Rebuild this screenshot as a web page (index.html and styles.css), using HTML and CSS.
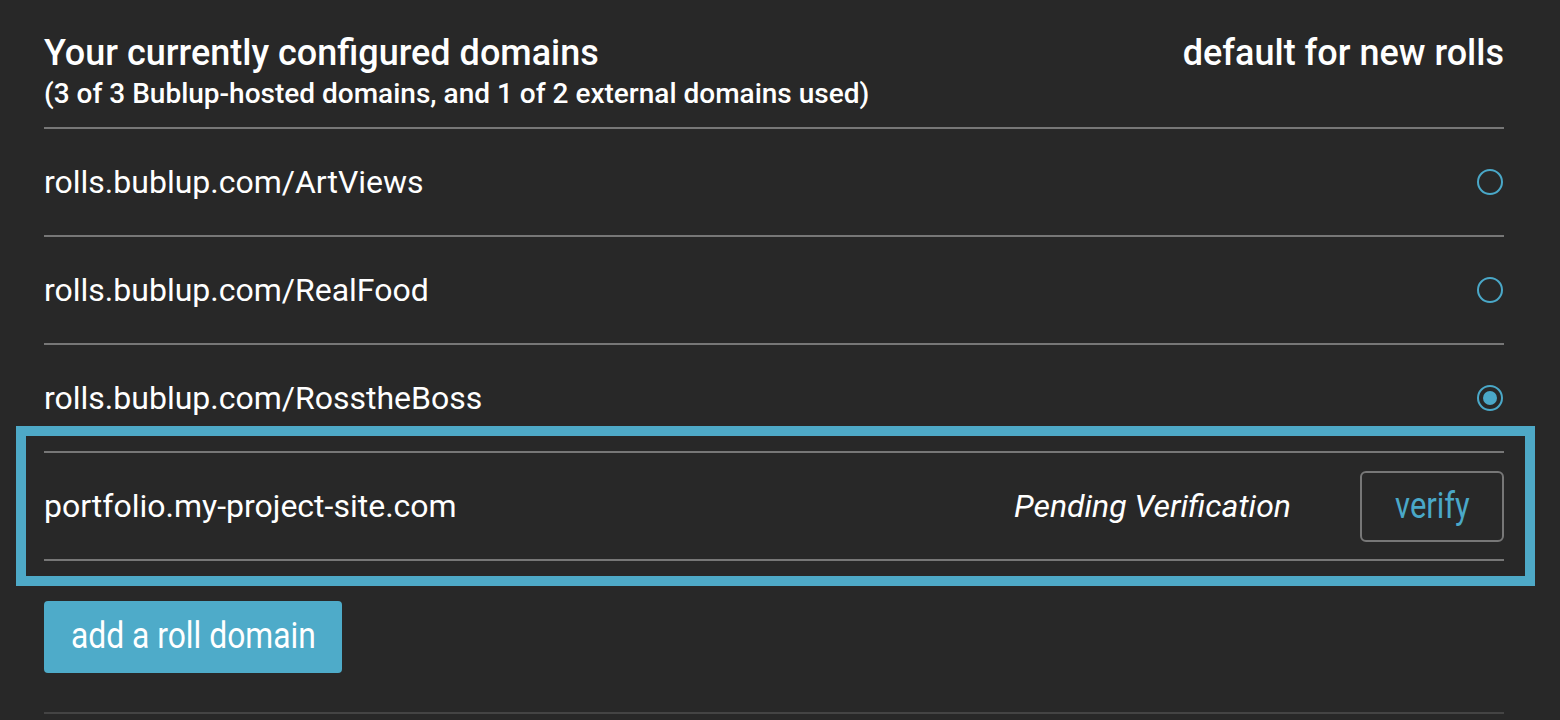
FILE: index.html
```html
<!DOCTYPE html>
<html lang="en">
<head>
    <meta charset="UTF-8">
    <meta name="viewport" content="width=device-width, initial-scale=1.0">
    <title>Roll domains</title>
    <link rel="stylesheet" href="styles.css">
</head>
<body>

<div class="domains">
    <div class="domains-header">
        <div>
            <h2>Your currently configured domains</h2>
            <p class="usage">(3 of 3 Bublup-hosted domains, and 1 of 2 external domains used)</p>
        </div>
        <h2>default for new rolls</h2>
    </div>

    <div class="row">
        <span class="domain">rolls.bublup.com/ArtViews</span>
        <span class="radio"></span>
    </div>
    <div class="row">
        <span class="domain">rolls.bublup.com/RealFood</span>
        <span class="radio"></span>
    </div>
    <div class="row">
        <span class="domain">rolls.bublup.com/RosstheBoss</span>
        <span class="radio checked"></span>
    </div>

    <div class="highlight">
        <div class="row pending">
            <span class="domain">portfolio.my-project-site.com</span>
            <span class="status">Pending Verification</span>
            <button type="button" class="verify"><span>verify</span></button>
        </div>
    </div>

    <button type="button" class="add-domain"><span>add a roll domain</span></button>

    <div class="footer-line"></div>
</div>

</body>
</html>
```

FILE: styles.css
```css
body {
    margin: 0;
    background-color: #282828;
    color: #fff;
    font-family: Roboto, "Liberation Sans", sans-serif;
}
.domains {
    width: 1460px;
    padding: 32px 0 0 44px;
}
.domains-header {
    display: flex;
    justify-content: space-between;
    align-items: flex-start;
    padding-bottom: 17px;
    border-bottom: 2px solid #777;
}
.domains-header h2 {
    margin: 0;
    font-size: 36px;
    font-weight: 500;
    line-height: 42px;
}
.usage {
    margin: 3px 0 0;
    font-size: 28px;
    font-weight: 500;
    line-height: 33px;
}
.row {
    display: flex;
    align-items: center;
    height: 106px;
    border-bottom: 2px solid #777;
    font-size: 32px;
}
.row:nth-of-type(4) {
    border-bottom: none;
}
.domain {
    flex: 1;
}
.radio {
    width: 22px;
    height: 22px;
    margin-right: 1px;
    border: 2px solid #4aa8c8;
    border-radius: 50%;
    display: flex;
    align-items: center;
    justify-content: center;
}
.radio.checked::after {
    content: "";
    width: 14px;
    height: 14px;
    border-radius: 50%;
    background-color: #4aa8c8;
}
.highlight {
    margin: -25px -31px 0 -28px;
    padding: 15px 21px 15px 18px;
    border: 10px solid #4ea9c7;
}
.row.pending {
    border-top: 2px solid #777;
}
.status {
    font-style: italic;
    margin-right: 69px;
}
.verify {
    width: 144px;
    height: 71px;
    padding: 0;
    background: none;
    border: 2px solid #777;
    border-radius: 6px;
    color: #4aa8c8;
    font-family: Roboto, sans-serif;
    font-size: 36px;
    cursor: pointer;
}
.verify span, .add-domain span {
    display: inline-block;
    transform: scaleX(0.86);
}
.add-domain {
    display: block;
    margin-top: 15px;
    width: 298px;
    height: 72px;
    padding: 0 0 3px;
    background-color: #4eabc9;
    border: none;
    border-radius: 4px;
    color: #fff;
    font-family: Roboto, sans-serif;
    font-size: 37px;
    cursor: pointer;
}
.footer-line {
    margin-top: 39px;
    border-top: 2px solid #444;
}
```
